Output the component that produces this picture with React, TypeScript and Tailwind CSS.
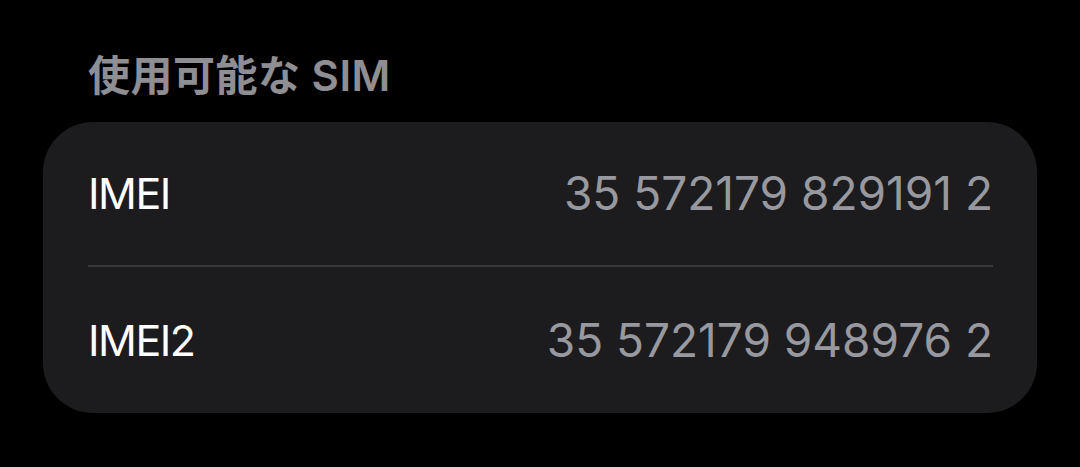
import React from 'react';

const rows = [
  { label: 'IMEI', value: '35 572179 829191 2' },
  { label: 'IMEI2', value: '35 572179 948976 2' },
];

export default function App() {
  return (
    <div
      className="w-[1080px] h-[467px] bg-black pt-[48px] px-[43px]"
      style={{ fontFamily: 'Inter, "Noto Sans CJK JP", sans-serif' }}
    >
      <h2 className="pl-[45px] text-[42px] leading-[56px] font-semibold text-[#8e8e93] tracking-[0.5px]">
        使用可能な SIM
      </h2>
      <div className="mt-[18px] bg-[#1c1c1e] rounded-[50px] pl-[45px]">
        {rows.map((row, i) => (
          <div
            key={row.label}
            className={
              i === 0
                ? 'flex items-center justify-between h-[145px] mr-[44px] border-b-[2px] border-[#38383a]'
                : 'flex items-center justify-between h-[146px] mr-[44px]'
            }
          >
            <span className="text-[43px] text-white tracking-[-1.5px]">{row.label}</span>
            <span className="text-[46px] text-[#98989f]">{row.value}</span>
          </div>
        ))}
      </div>
    </div>
  );
}
